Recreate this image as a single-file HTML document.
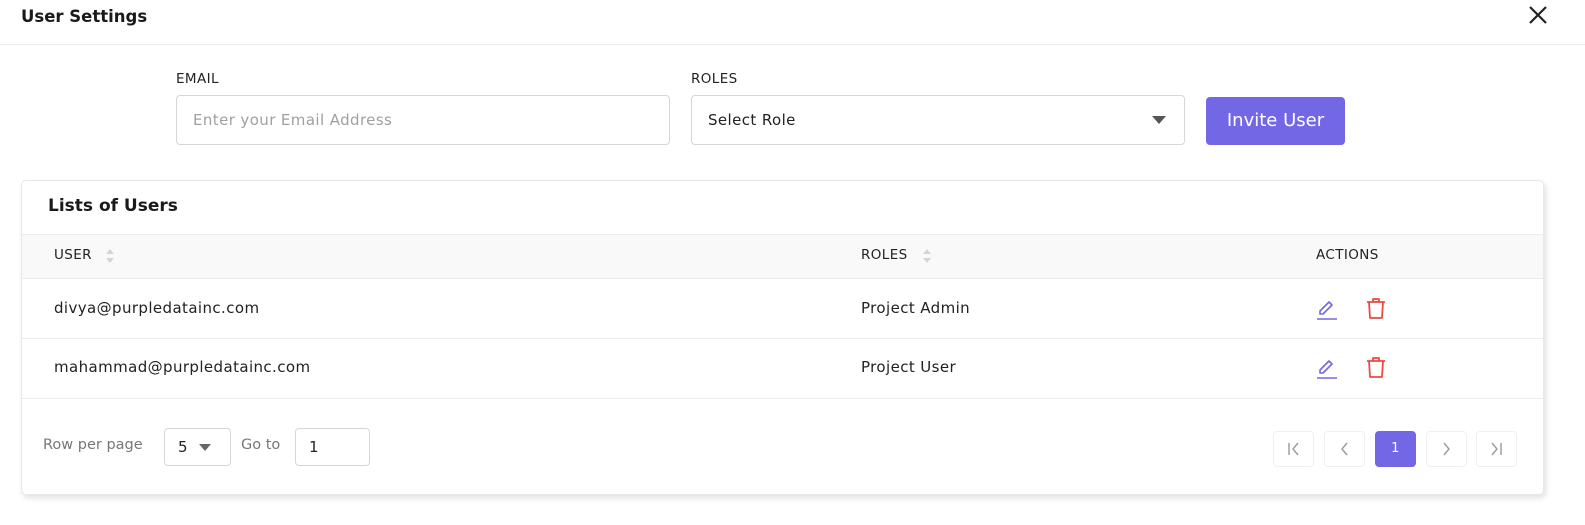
<!DOCTYPE html>
<html><head><style>
*{box-sizing:border-box;margin:0;padding:0}
body{width:1585px;height:525px;background:#fff;font-family:"DejaVu Sans",sans-serif;letter-spacing:0.4px;color:#222;position:relative;overflow:hidden}
.a{position:absolute}
.inp{border:1px solid #d6d6d6;border-radius:4px;background:#fff}
.lbl{font-size:13.5px;color:#222}
.pb{position:absolute;top:431px;width:41px;height:36px;border:1px solid #f0f0f0;border-radius:4px;background:#fff}
</style></head><body>
<div class="a" style="left:21px;top:7px;font-size:16.5px;font-weight:bold;color:#1a1a1a;letter-spacing:0">User Settings</div>
<svg class="a" style="left:1528px;top:5px" width="20" height="20" viewBox="0 0 20 20"><path d="M2 2L18 18M18 2L2 18" stroke="#222" stroke-width="2.2"/></svg>
<div class="a" style="left:0;top:44px;width:1585px;height:1px;background:#ececec"></div>

<div class="a lbl" style="left:176px;top:71px">EMAIL</div>
<div class="a inp" style="left:176px;top:95px;width:494px;height:50px"><span class="a" style="left:16px;top:15px;font-size:15px;color:#a0a0a0">Enter your Email Address</span></div>
<div class="a lbl" style="left:691px;top:71px">ROLES</div>
<div class="a inp" style="left:691px;top:95px;width:494px;height:50px"><span class="a" style="left:16px;top:15px;font-size:15px;color:#222">Select Role</span>
<svg class="a" style="left:460px;top:20px" width="14" height="8"><path d="M0 0H14L7 8Z" fill="#555"/></svg></div>
<div class="a" style="left:1206px;top:97px;width:139px;height:48px;background:#7367e6;border-radius:4px;color:#fff;font-size:18px;text-align:center;line-height:48px;letter-spacing:0">Invite User</div>

<div class="a" style="left:21px;top:180px;width:1523px;height:315px;border:1px solid #e8e8e8;border-radius:5px;box-shadow:2px 3px 6px rgba(0,0,0,.12);background:#fff"></div>
<div class="a" style="left:48px;top:196px;font-size:17px;font-weight:bold;color:#1a1a1a;letter-spacing:0">Lists of Users</div>
<div class="a" style="left:22px;top:234px;width:1521px;height:45px;background:#f9f9f9;border-top:1px solid #ececec;border-bottom:1px solid #ececec"></div>
<div class="a" style="left:54px;top:247px;font-size:13.5px">USER</div>
<svg class="a" style="left:105px;top:248px" width="10" height="16"><path d="M1 6L5 1L9 6ZM1 10L5 15L9 10Z" fill="#d4d4d4"/></svg>
<div class="a" style="left:861px;top:247px;font-size:13.5px">ROLES</div>
<svg class="a" style="left:922px;top:248px" width="10" height="16"><path d="M1 6L5 1L9 6ZM1 10L5 15L9 10Z" fill="#d4d4d4"/></svg>
<div class="a" style="left:1316px;top:247px;font-size:13.5px">ACTIONS</div>

<div class="a" style="left:54px;top:299px;font-size:15px">divya@purpledatainc.com</div>
<div class="a" style="left:861px;top:299px;font-size:15px">Project Admin</div>
<div class="a" style="left:22px;top:338px;width:1521px;height:1px;background:#ececec"></div>
<div class="a" style="left:54px;top:358px;font-size:15px">mahammad@purpledatainc.com</div>
<div class="a" style="left:861px;top:358px;font-size:15px">Project User</div>
<div class="a" style="left:22px;top:398px;width:1521px;height:1px;background:#ececec"></div>

<svg class="a" style="left:1316px;top:299px" width="22" height="22" viewBox="0 0 22 22"><path d="M4 15L4 12L13 3L16 6L7 15Z" fill="none" stroke="#7367e6" stroke-width="1.6" stroke-linejoin="round"/><path d="M1 20H21" stroke="#7367e6" stroke-width="1.6"/></svg>
<svg class="a" style="left:1366px;top:298px" width="20" height="22" viewBox="0 0 20 22"><path d="M1 4H19M7 4V1H13V4M3 4L4 20H16L17 4" fill="none" stroke="#ec4a3f" stroke-width="1.8" stroke-linejoin="round"/></svg>
<svg class="a" style="left:1316px;top:358px" width="22" height="22" viewBox="0 0 22 22"><path d="M4 15L4 12L13 3L16 6L7 15Z" fill="none" stroke="#7367e6" stroke-width="1.6" stroke-linejoin="round"/><path d="M1 20H21" stroke="#7367e6" stroke-width="1.6"/></svg>
<svg class="a" style="left:1366px;top:357px" width="20" height="22" viewBox="0 0 20 22"><path d="M1 4H19M7 4V1H13V4M3 4L4 20H16L17 4" fill="none" stroke="#ec4a3f" stroke-width="1.8" stroke-linejoin="round"/></svg>

<div class="a" style="left:43px;top:437px;font-size:14.5px;color:#777;letter-spacing:0">Row per page</div>
<div class="a inp" style="left:164px;top:428px;width:67px;height:38px"><span class="a" style="left:13px;top:9px;font-size:15px;color:#222">5</span>
<svg class="a" style="left:34px;top:15px" width="12" height="7"><path d="M0 0H12L6 7Z" fill="#666"/></svg></div>
<div class="a" style="left:241px;top:437px;font-size:14.5px;color:#777;letter-spacing:0">Go to</div>
<div class="a inp" style="left:295px;top:428px;width:75px;height:38px"><span class="a" style="left:13px;top:9px;font-size:15px;color:#222">1</span></div>

<div class="pb" style="left:1273px"><svg width="39" height="34"><path d="M15 11V23M24 11L19 17L24 23" fill="none" stroke="#999" stroke-width="1.4"/></svg></div>
<div class="pb" style="left:1324px"><svg width="39" height="34"><path d="M22 11L17 17L22 23" fill="none" stroke="#999" stroke-width="1.4"/></svg></div>
<div class="pb" style="left:1375px;background:#7367e6;border-color:#7367e6;color:#fff;font-size:13px;text-align:center;line-height:34px">1</div>
<div class="pb" style="left:1426px"><svg width="39" height="34"><path d="M17 11L22 17L17 23" fill="none" stroke="#999" stroke-width="1.4"/></svg></div>
<div class="pb" style="left:1476px"><svg width="39" height="34"><path d="M15 11L20 17L15 23M24 11V23" fill="none" stroke="#999" stroke-width="1.4"/></svg></div>
</body></html>
